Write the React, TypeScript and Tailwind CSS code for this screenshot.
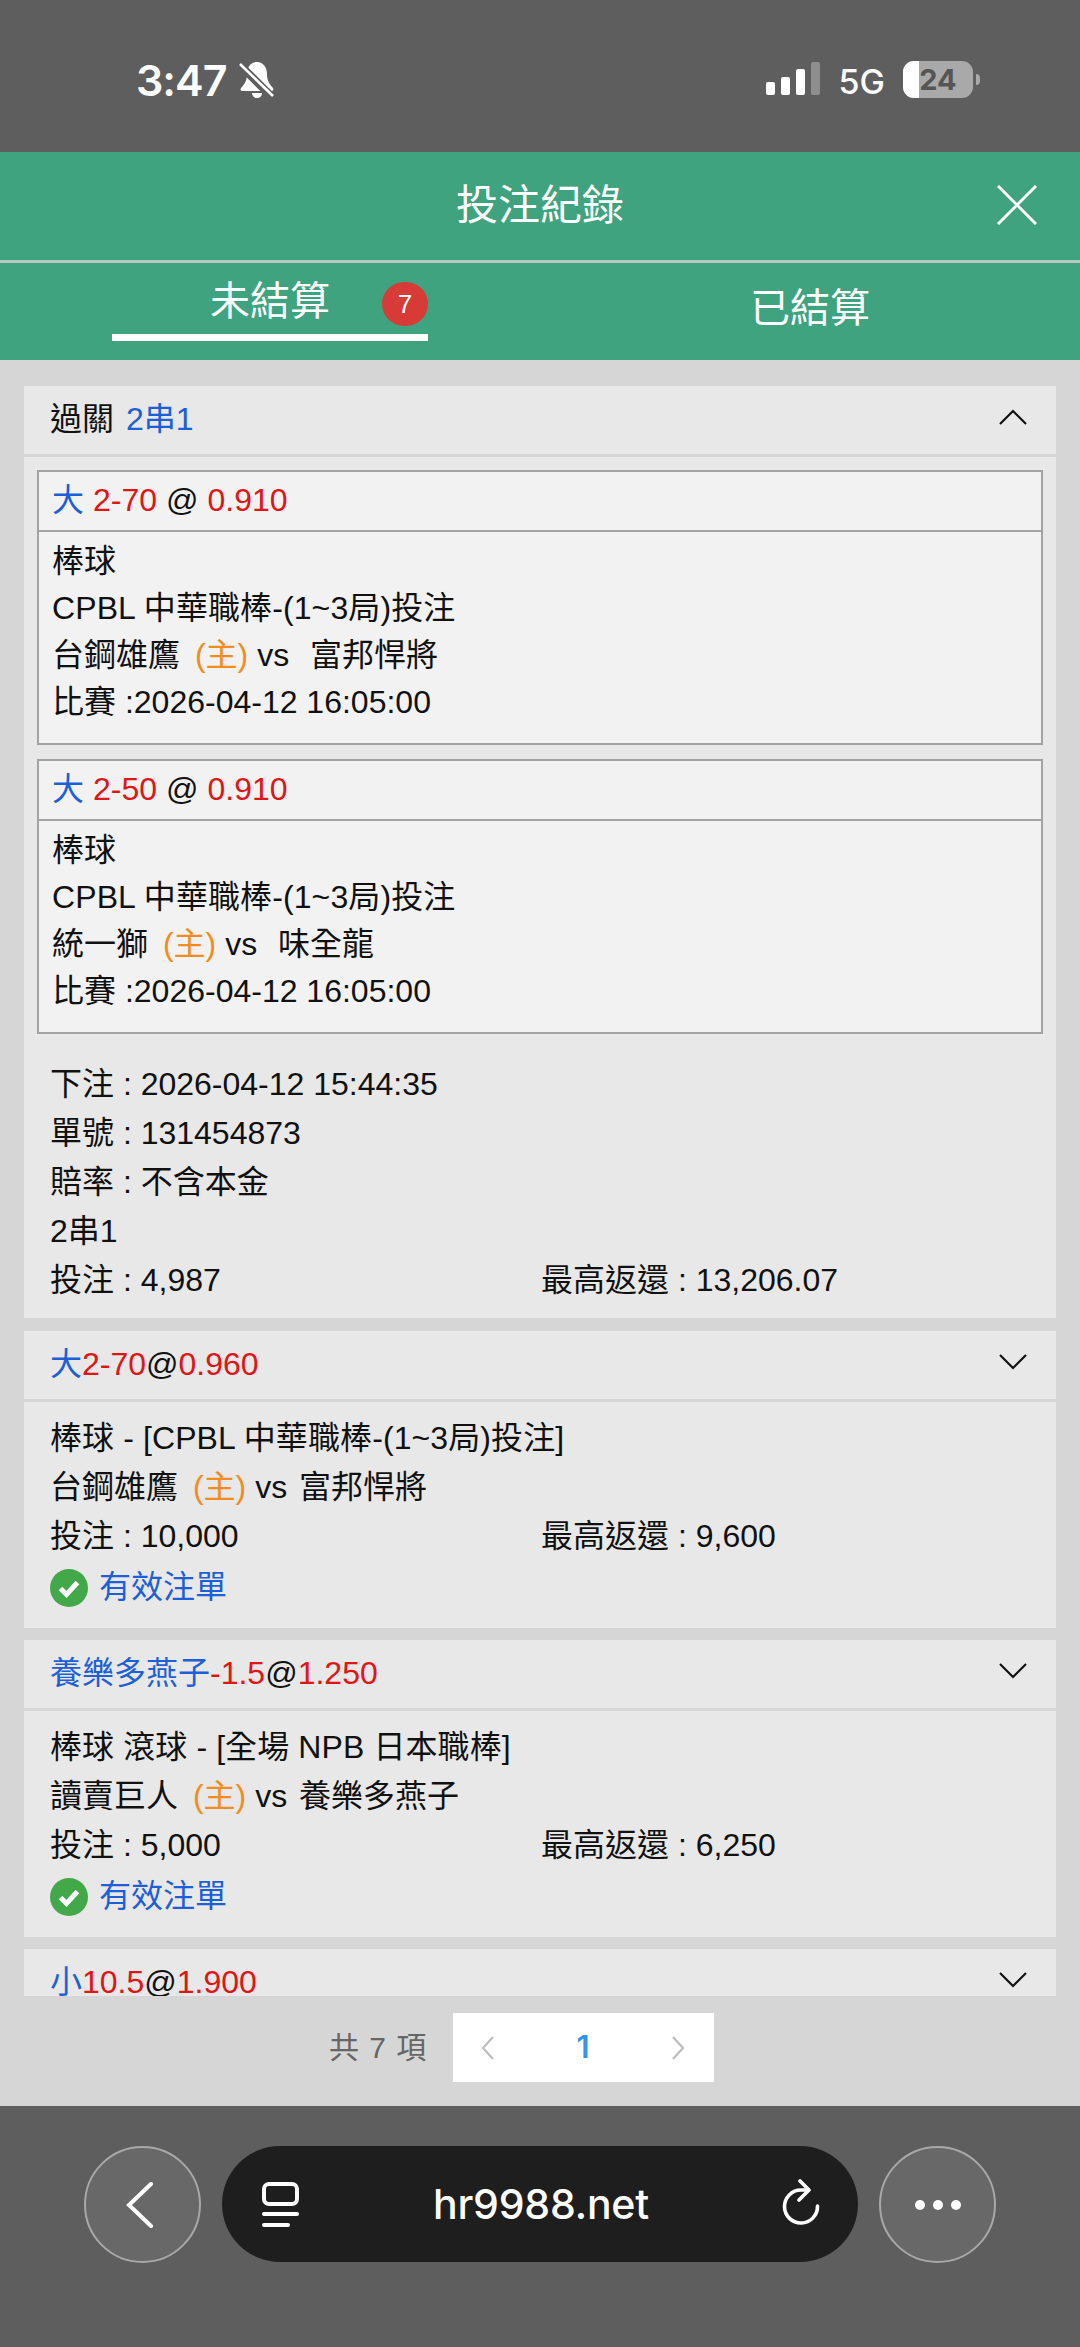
import React from 'react';

const FONT = 'font-["Liberation_Sans","Noto_Sans_CJK_TC",sans-serif]';

const Chevron: React.FC<{ up?: boolean }> = ({ up }) => (
  <svg width="30" height="18" viewBox="0 0 30 18" fill="none" stroke="#111" strokeWidth="2.2" className="mb-[7px]">
    <path d={up ? 'M2 16 15 3l13 13' : 'M2 2l13 13L28 2'} />
  </svg>
);

const Home = () => <span className="text-[#f28c1e] ml-[6px]">(主)</span>;

// accordion header with the pick and the chevron
const PanelHeader: React.FC<{ up?: boolean; children: React.ReactNode }> = ({ up, children }) => (
  <div className="h-[68px] bg-[#e8e8e8] flex items-center justify-between pl-[26px] pr-[28px]">
    <div className="leading-[64px] pb-[2px]">{children}</div>
    <Chevron up={up} />
  </div>
);

const Leg: React.FC<{ pick: string; line: string; home: string; away: string }> = ({ pick, line, home, away }) => (
  <div className="h-[275px] border-2 border-[#a3a3a3] bg-[#f2f2f2]">
    <div className="h-[60px] border-b-2 border-[#a3a3a3] flex items-center pl-[13px] pb-[3px]">
      <span className="text-[#1d5fd8]">{pick}</span>
      <span className="text-[#e01515] ml-[9px]">{line}</span>
      <span className="ml-[9px]">@</span>
      <span className="text-[#e01515] ml-[9px]">0.910</span>
    </div>
    <div className="pt-[6px] pl-[13px] leading-[47px]">
      <div>棒球</div>
      <div className="tracking-[0.1px]">CPBL 中華職棒-(1~3局)投注</div>
      <div>
        {home} <Home /> vs&nbsp; <span className="ml-[3px]">{away}</span>
      </div>
      <div>比賽 :2026-04-12 16:05:00</div>
    </div>
  </div>
);

const Amounts: React.FC<{ stake: string; max: string }> = ({ stake, max }) => (
  <div className="grid grid-cols-[491px_1fr]">
    <div>投注 : {stake}</div>
    <div>最高返還 : {max}</div>
  </div>
);

const Bet: React.FC<{
  title: React.ReactNode;
  league: string;
  home: string;
  away: string;
  stake: string;
  max: string;
}> = ({ title, league, home, away, stake, max }) => (
  <div className="mb-[12px]">
    <PanelHeader>{title}</PanelHeader>
    <div className="mt-[3px] h-[226px] bg-[#e8e8e8] pt-[12px] pl-[26px] leading-[49px]">
      <div className="tracking-[0.1px]">{league}</div>
      <div>
        {home} <Home /> vs <span className="ml-[3px]">{away}</span>
      </div>
      <Amounts stake={stake} max={max} />
      <div className="flex items-center text-[#1d5fd8] mt-[2px]">
        <svg width="38" height="38" viewBox="0 0 38 38" className="mr-[11px]">
          <circle cx="19" cy="19" r="19" fill="#43a84a" />
          <path d="M10.5 19.5l6 6 11-12" fill="none" stroke="#fff" strokeWidth="5" />
        </svg>
        有效注單
      </div>
    </div>
  </div>
);

export default function App() {
  return (
    <div className={`w-[1080px] h-[2347px] flex flex-col bg-[#d6d6d6] text-[32px] text-[#111] overflow-hidden ${FONT}`}>
      {/* status bar */}
      <div className="h-[152px] bg-[#5e5e5e] flex justify-between text-white font-['Inter',sans-serif] pt-[58px] pl-[136px] pr-[100px]">
        <div className="flex items-start">
          <span className="text-[43px] font-semibold leading-[44px] tracking-[-1px]">3:47</span>
          <svg width="36" height="38" viewBox="0 0 36 38" className="ml-[12px] mt-[3px]" fill="#fff">
            <path d="M19 1c-6 0-10 5-10 12 0 7-3 11-6 14-1 2 0 3 2 3h28c2 0 3-1 2-3-3-3-6-7-6-14 0-7-4-12-10-12z" />
            <path d="M14 32h10c0 3-2 5-5 5s-5-2-5-5z" />
            <path d="M1 3l33 33" stroke="#5e5e5e" strokeWidth="8" />
            <path d="M2 3l33 32" stroke="#fff" strokeWidth="2.6" />
          </svg>
        </div>
        <div className="flex items-start">
          <div className="flex items-end gap-[6px] h-[33px] mt-[4px]">
            <div className="w-[9px] h-[13px] rounded-[2px] bg-white" />
            <div className="w-[9px] h-[18px] rounded-[2px] bg-white" />
            <div className="w-[9px] h-[26px] rounded-[2px] bg-white" />
            <div className="w-[9px] h-[33px] rounded-[2px] bg-[#8e8e8e]" />
          </div>
          <span className="ml-[19px] mt-[4px] text-[34px] leading-[40px] font-medium">5G</span>
          <div className="relative ml-[18px] w-[70px] h-[37px] mt-[3px] rounded-[11px] overflow-hidden bg-[#a9a9a9] flex items-center justify-center">
            <div className="absolute left-0 top-0 bottom-0 w-[16px] bg-white" />
            <span className="relative text-[29px] font-bold text-[#555] leading-none">24</span>
          </div>
          <div className="ml-[3px] mt-[16px] w-[4px] h-[11px] rounded-r-full bg-[#a9a9a9]" />
        </div>
      </div>

      {/* title */}
      <div className="h-[108px] bg-[#3fa380] relative flex items-center justify-center text-white text-[42px]">
        <span className="pb-[2px]">投注紀錄</span>
        <svg width="40" height="40" viewBox="0 0 40 40" className="absolute right-[43px] top-[33px]" stroke="#fff" strokeWidth="3">
          <path d="M1 1l38 38M39 1L1 39" />
        </svg>
      </div>
      <div className="h-[3px] bg-[#b9c9c2]" />

      {/* tabs */}
      <div className="h-[97px] bg-[#3fa380] grid grid-cols-2 text-white text-[40px]">
        <div className="relative w-[316px] mx-auto h-[78px] border-b-[7px] border-white flex justify-center pt-[13px] leading-[50px]">
          未結算
          <span className="absolute right-0 top-[19px] w-[46px] h-[44px] rounded-full bg-[#d63b37] flex items-center justify-center text-[26px]">7</span>
        </div>
        <div className="flex justify-center pt-[20px] leading-[50px]">已結算</div>
      </div>

      {/* bet list, cut off by the pager */}
      <div className="h-[1636px] overflow-hidden px-[24px] pt-[26px]">
        <PanelHeader up>
          過關 <span className="text-[#1d5fd8] ml-[3px]">2串1</span>
        </PanelHeader>
        <div className="mt-[3px] mb-[13px] h-[861px] bg-[#e8e8e8] px-[13px] pt-[13px]">
          <Leg pick="大" line="2-70" home="台鋼雄鷹" away="富邦悍將" />
          <div className="h-[14px]" />
          <Leg pick="大" line="2-50" home="統一獅" away="味全龍" />
          <div className="mt-[26px] pl-[13px] leading-[49px]">
            <div>下注 : 2026-04-12 15:44:35</div>
            <div>單號 : 131454873</div>
            <div>賠率 : 不含本金</div>
            <div>2串1</div>
            <Amounts stake="4,987" max="13,206.07" />
          </div>
        </div>
        <Bet
          title={
            <>
              <span className="text-[#1d5fd8]">大</span>
              <span className="text-[#e01515]">2-70</span>@<span className="text-[#e01515]">0.960</span>
            </>
          }
          league="棒球 - [CPBL 中華職棒-(1~3局)投注]"
          home="台鋼雄鷹"
          away="富邦悍將"
          stake="10,000"
          max="9,600"
        />
        <Bet
          title={
            <>
              <span className="text-[#1d5fd8]">養樂多燕子</span>
              <span className="text-[#e01515]">-1.5</span>@<span className="text-[#e01515]">1.250</span>
            </>
          }
          league="棒球 滾球 - [全場 NPB 日本職棒]"
          home="讀賣巨人"
          away="養樂多燕子"
          stake="5,000"
          max="6,250"
        />
        <PanelHeader>
          <span className="text-[#1d5fd8]">小</span>
          <span className="text-[#e01515]">10.5</span>@<span className="text-[#e01515]">1.900</span>
        </PanelHeader>
      </div>

      {/* pager */}
      <div className="h-[110px] flex items-start pt-[17px] pl-[329px]">
        <span className="w-[124px] h-[69px] flex items-center text-[#666] text-[30px] tracking-[1px]">共 7 項</span>
        <div className="w-[261px] h-[69px] bg-white flex items-center justify-between pl-[28px] pr-[29px]">
          <svg width="14" height="26" viewBox="0 0 14 26" fill="none" stroke="#bdbdbd" strokeWidth="2.2">
            <path d="M12 2L2 13l10 11" />
          </svg>
          <span className="text-[#2f96e8] font-['Inter',sans-serif] font-semibold text-[31px]">1</span>
          <svg width="14" height="26" viewBox="0 0 14 26" fill="none" stroke="#bdbdbd" strokeWidth="2.2">
            <path d="M2 2l10 11L2 24" />
          </svg>
        </div>
      </div>

      {/* browser toolbar */}
      <div className="flex-1 bg-[#5e5e5e] flex items-start pt-[40px] pl-[84px] text-white font-['Inter',sans-serif]">
        <div className="w-[117px] h-[117px] rounded-full bg-[#686868] border-2 border-[#a8a8a8] flex items-center justify-center pr-[6px]">
          <svg width="28" height="46" viewBox="0 0 28 46" fill="none" stroke="#fff" strokeWidth="4" strokeLinecap="round">
            <path d="M25 2L3 23l22 21" />
          </svg>
        </div>
        <div className="ml-[21px] w-[636px] h-[116px] rounded-full bg-[#1e1e1e] flex items-center justify-between pl-[38px] pr-[38px]">
          <svg width="40" height="48" viewBox="0 0 40 48" fill="none" stroke="#fff" strokeWidth="4" strokeLinecap="round">
            <rect x="4" y="4" width="33" height="20" rx="5" />
            <path d="M4 34h33M4 45h24" />
          </svg>
          <span className="text-[41px] font-medium tracking-[-0.2px] mt-[2px]">hr9988.net</span>
          <svg width="38" height="50" viewBox="0 0 38 50" fill="none" stroke="#fff" strokeWidth="3.6" strokeLinecap="round" strokeLinejoin="round">
            <path d="M26 11H19A16.500 16.500 0 1 0 35.500 27" />
            <path d="M18 2l9 9-10 10" />
          </svg>
        </div>
        <div className="ml-[21px] w-[117px] h-[117px] rounded-full bg-[#686868] border-2 border-[#a8a8a8] flex items-center justify-center gap-[8px]">
          <div className="w-[10px] h-[10px] rounded-full bg-white" />
          <div className="w-[10px] h-[10px] rounded-full bg-white" />
          <div className="w-[10px] h-[10px] rounded-full bg-white" />
        </div>
      </div>
    </div>
  );
}
